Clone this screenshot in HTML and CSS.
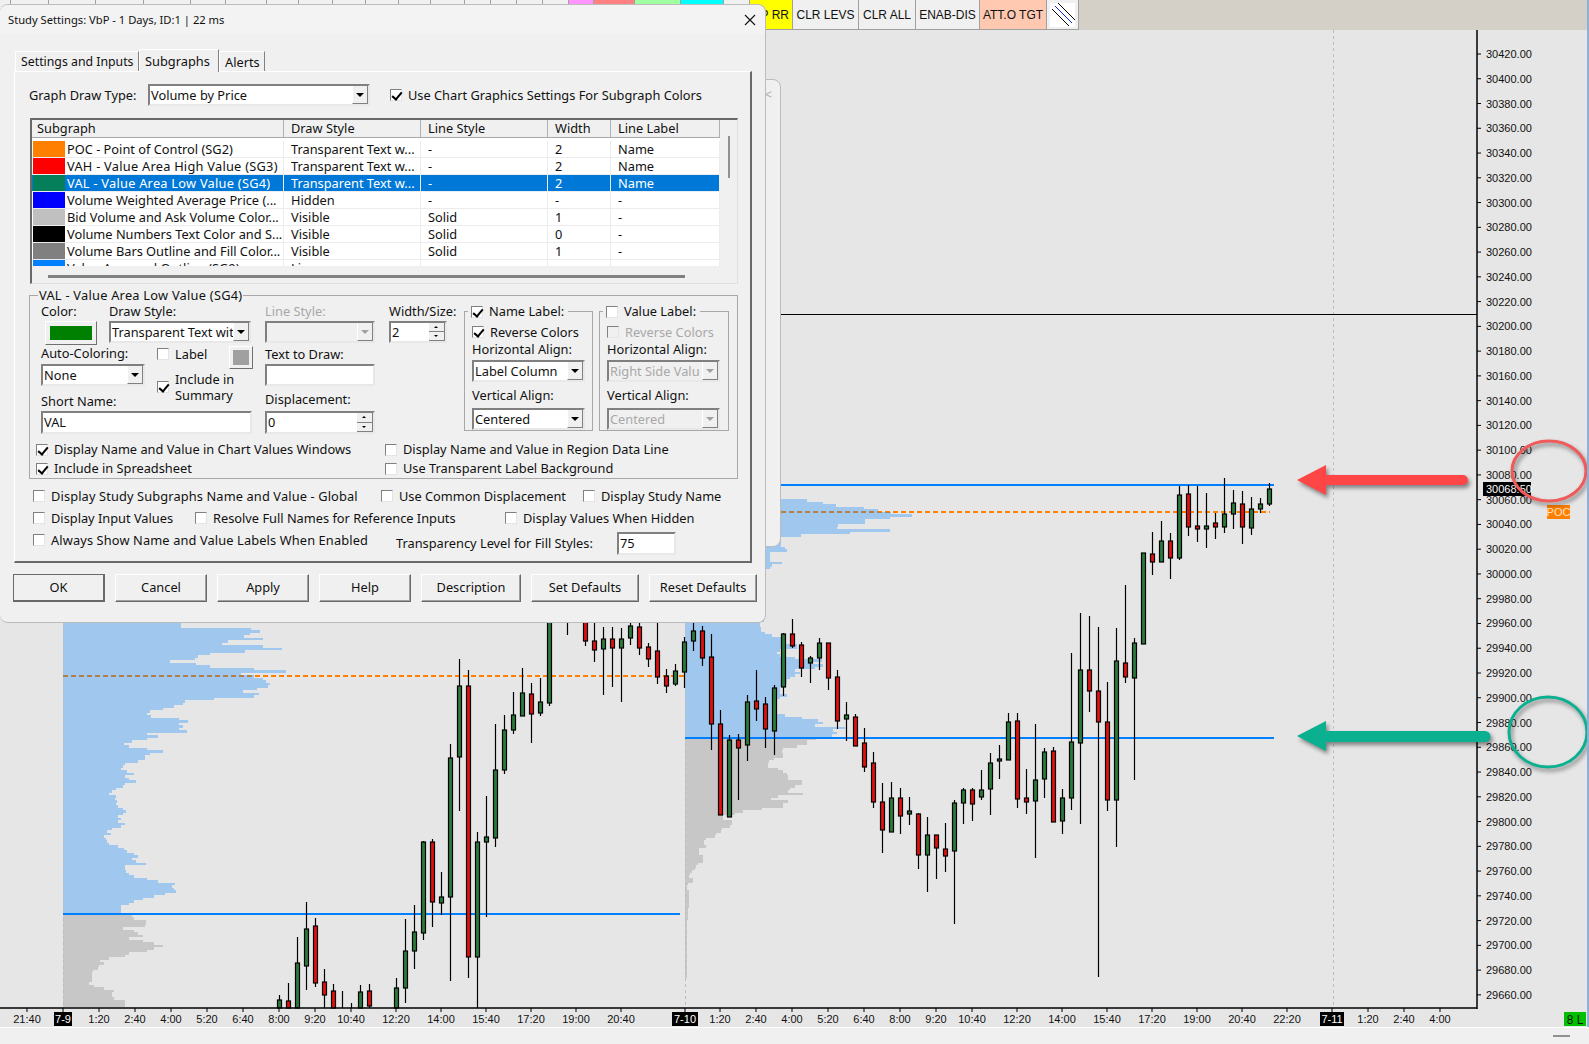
FILE: index.html
```html
<!DOCTYPE html>
<html>

<head>
  <title>Study Settings: VbP</title>
  <link rel="stylesheet" href="styles.css">
</head>

<body>
  <div class="workspace">
    <div class="toolbar">
      <div class="tb"></div><div class="tb"></div><div class="tb"></div><div class="tb"></div><div class="tb"></div>
      <div class="tb"></div><div class="tb"></div><div class="tb"></div><div class="tb"></div><div class="tb"></div>
      <div class="tb"></div><div class="tb"></div><div class="tb"></div><div class="tb"></div><div class="tb"></div>
      <div class="tb"></div><div class="tb"></div>
      <div class="tb tb-pink"></div>
      <div class="tb tb-salmon"></div>
      <div class="tb tb-green"></div>
      <div class="tb tb-cyan"></div>
      <div class="tb"></div>
      <div class="tb tb-yellow">P RR</div>
      <div class="tb">CLR LEVS</div>
      <div class="tb">CLR ALL</div>
      <div class="tb">ENAB-DIS</div>
      <div class="tb tb-peach">ATT.O TGT</div>
      <div class="tb tb-hatch">
        <svg width="25" height="24" viewBox="0 0 25 24">
          <rect width="25" height="24" fill="#fff" />
          <path d="M2 6 L19 23 M8 0 L25 17" stroke="#000" fill="none" />
          <path d="M5 3 L22 20" stroke="#0030e0" fill="none" />
        </svg>
      </div>
    </div>
    <div class="chart" id="chart"></div>
  </div>
  <div class="statusbar"><span class="min-dash"></span></div>

  <div class="side-panel"><span class="side-arrow">&lt;</span></div>

  <div class="dialog">
    <div class="title-bar">
      <span>Study Settings: VbP - 1 Days, ID:1 | 22 ms</span>
      <svg class="close-x" width="12" height="12" viewBox="0 0 12 12">
        <path d="M1 1 L11 11 M11 1 L1 11" stroke="#111" stroke-width="1.1" fill="none" />
      </svg>
    </div>

    <div class="tabs">
      <div class="tab tab-first">Settings and Inputs</div>
      <div class="tab tab-active">Subgraphs</div>
      <div class="tab tab-last">Alerts</div>
    </div>

    <div class="tab-panel">
      <div class="draw-type">
        <span class="draw-type-label">Graph Draw Type:</span>
        <div class="sel w222"><span class="sel-text">Volume by Price</span><span class="sel-btn"></span></div>
        <label class="opt chart-colors"><span class="check on"></span>Use Chart Graphics Settings For Subgraph Colors</label>
      </div>

      <div class="listbox">
        <div class="list-body">
          <div class="list-table">
            <div class="list-head">
              <div>Subgraph</div>
              <div>Draw Style</div>
              <div>Line Style</div>
              <div>Width</div>
              <div>Line Label</div>
            </div>
            <div class="list-rows">
              <div class="list-row">
                <div class="cell-name"><span class="swatch sw-orange"></span>POC - Point of Control (SG2)</div>
                <div>Transparent Text w...</div><div>-</div><div>2</div><div>Name</div>
              </div>
              <div class="list-row">
                <div class="cell-name roomy"><span class="swatch sw-red"></span>VAH - Value Area High Value (SG3)</div>
                <div>Transparent Text w...</div><div>-</div><div>2</div><div>Name</div>
              </div>
              <div class="list-row selected">
                <div class="cell-name roomy"><span class="swatch sw-teal"></span>VAL - Value Area Low Value (SG4)</div>
                <div>Transparent Text w...</div><div>-</div><div>2</div><div>Name</div>
              </div>
              <div class="list-row">
                <div class="cell-name"><span class="swatch sw-blue"></span>Volume Weighted Average Price (...</div>
                <div>Hidden</div><div>-</div><div>-</div><div>-</div>
              </div>
              <div class="list-row">
                <div class="cell-name"><span class="swatch sw-silver"></span>Bid Volume and Ask Volume Color...</div>
                <div>Visible</div><div>Solid</div><div>1</div><div>-</div>
              </div>
              <div class="list-row">
                <div class="cell-name"><span class="swatch sw-black"></span>Volume Numbers Text Color and S...</div>
                <div>Visible</div><div>Solid</div><div>0</div><div>-</div>
              </div>
              <div class="list-row">
                <div class="cell-name"><span class="swatch sw-gray"></span>Volume Bars Outline and Fill Color...</div>
                <div>Visible</div><div>Solid</div><div>1</div><div>-</div>
              </div>
              <div class="list-row">
                <div class="cell-name"><span class="swatch sw-sky"></span>Value Area and Outline (SG9)</div>
                <div>Line</div><div>-</div><div>-</div><div>-</div>
              </div>
            </div>
          </div>
          <div class="vscroll"></div>
        </div>
        <div class="hscroll"></div>
      </div>

      <fieldset class="group">
        <legend class="roomy">VAL - Value Area Low Value (SG4)</legend>
        <div class="group-top">
          <div class="col-a">
            <div class="color-row">
              <div class="color-col">
                <div class="lbl">Color:</div>
                <div class="color-btn"><span class="color-fill"></span></div>
              </div>
              <div>
                <div class="lbl">Draw Style:</div>
                <div class="sel w142"><span class="sel-text">Transparent Text wit</span><span class="sel-btn"></span></div>
              </div>
            </div>
            <div class="lower">
              <div>
                <div class="lbl">Auto-Coloring:</div>
                <div class="sel w104 mt1"><span class="sel-text">None</span><span class="sel-btn"></span></div>
                <div class="lbl short-lbl">Short Name:</div>
              </div>
              <div>
                <div class="label-row">
                  <label class="opt"><span class="check"></span>Label</label>
                  <div class="mini-color"><span class="mini-fill"></span></div>
                </div>
                <label class="opt summary"><span class="check on"></span><span>Include in<br>Summary</span></label>
              </div>
              <div class="field short-input">VAL</div>
            </div>
          </div>

          <div class="col-b">
            <div class="lbl off">Line Style:</div>
            <div class="sel w110 disabled"><span class="sel-text"></span><span class="sel-btn"></span></div>
            <div class="lbl mt4">Text to Draw:</div>
            <div class="field w110"></div>
            <div class="lbl mt6">Displacement:</div>
            <div class="spin w110 tall mt2"><span class="sel-text">0</span><span class="spin-btns"><i class="up"></i><i class="down"></i></span></div>
          </div>

          <div class="col-c">
            <div class="lbl">Width/Size:</div>
            <div class="spin w58"><span class="sel-text">2</span><span class="spin-btns"><i class="up"></i><i class="down"></i></span></div>
          </div>

          <fieldset class="label-group">
            <legend><label class="opt"><span class="check on"></span>Name Label:</label></legend>
            <label class="opt reverse"><span class="check on"></span>Reverse Colors</label>
            <div class="lbl">Horizontal Align:</div>
            <div class="sel w113 mt1"><span class="sel-text">Label Column</span><span class="sel-btn"></span></div>
            <div class="lbl mt6">Vertical Align:</div>
            <div class="sel w113 mt3"><span class="sel-text">Centered</span><span class="sel-btn"></span></div>
          </fieldset>

          <fieldset class="label-group value-group">
            <legend><label class="opt"><span class="check"></span>Value Label:</label></legend>
            <label class="opt reverse off"><span class="check disabled"></span>Reverse Colors</label>
            <div class="lbl">Horizontal Align:</div>
            <div class="sel w113 mt1 disabled"><span class="sel-text">Right Side Valu</span><span class="sel-btn"></span></div>
            <div class="lbl mt6">Vertical Align:</div>
            <div class="sel w113 mt3 disabled"><span class="sel-text">Centered</span><span class="sel-btn"></span></div>
          </fieldset>
        </div>

        <div class="group-checks">
          <label class="opt"><span class="check on"></span>Display Name and Value in Chart Values Windows</label>
          <label class="opt"><span class="check"></span>Display Name and Value in Region Data Line</label>
          <label class="opt"><span class="check on"></span>Include in Spreadsheet</label>
          <label class="opt"><span class="check"></span>Use Transparent Label Background</label>
        </div>
      </fieldset>

      <div class="global-row row-1">
        <label class="opt slight"><span class="check"></span>Display Study Subgraphs Name and Value - Global</label>
        <label class="opt"><span class="check"></span>Use Common Displacement</label>
        <label class="opt"><span class="check"></span>Display Study Name</label>
      </div>
      <div class="global-row row-2">
        <label class="opt"><span class="check"></span>Display Input Values</label>
        <label class="opt"><span class="check"></span>Resolve Full Names for Reference Inputs</label>
        <label class="opt"><span class="check"></span>Display Values When Hidden</label>
      </div>
      <div class="global-row row-3">
        <label class="opt slight"><span class="check"></span>Always Show Name and Value Labels When Enabled</label>
        <span class="transparency">Transparency Level for Fill Styles:</span>
        <div class="field w59 transparency">75</div>
      </div>
    </div>

    <div class="buttons">
      <button class="btn btn-default">OK</button>
      <button class="btn">Cancel</button>
      <button class="btn">Apply</button>
      <button class="btn">Help</button>
      <button class="btn btn-desc">Description</button>
      <button class="btn btn-wide">Set Defaults</button>
      <button class="btn btn-wide">Reset Defaults</button>
    </div>
  </div>

  <script src="chart.js"></script>
</body>

</html>
```

FILE: styles.css
```css
/* Page */
* {
  box-sizing: border-box;
}

html,
body {
  margin: 0;
  height: 100%;
  overflow: hidden;
}

body {
  background-color: #f0f0f0;
  font-family: "Noto Sans", sans-serif;
  font-size: 12.8px;
  color: #111;
}

.roomy {
  letter-spacing: 0.25px;
}

.slight {
  letter-spacing: 0.13px;
}

.workspace {
  height: 1027px;
  display: flex;
  flex-direction: column;
  border-right: 2px solid #8fb0d6;
}

/* Top toolbar */
.toolbar {
  height: 30px;
  flex: none;
  display: grid;
  grid-template-columns: 11px 38px 47px 48px 47px 35px 41px 32px 34px 33px 33px 32px 34px 26px 26px 26px 26px 25px 41px 46px 43px 26px 43px 66px 57px 64px 67px 32px;
  justify-content: start;
  background-color: #d4d0c8;
  font-family: "Liberation Sans", sans-serif;
  font-size: 12px;
}

.tb {
  background-color: #f0f0f0;
  border-right: 1px solid #a0a0a0;
  border-bottom: 1px solid #a0a0a0;
  display: flex;
  align-items: center;
  justify-content: center;
  white-space: nowrap;
}

.tb-pink { background-color: #ff96ff; }
.tb-salmon { background-color: #ff8080; }
.tb-green { background-color: #a0ffa0; }
.tb-cyan { background-color: #00ffff; }
.tb-yellow { background-color: #ffff00; justify-content: flex-end; padding-right: 3px; }
.tb-peach { background-color: #ffc8b0; }

.chart {
  flex: 1;
  background-color: #e6e6e6;
}

.chart svg {
  display: block;
}

.statusbar {
  height: 17px;
  border-top: 1px solid #fff;
  display: flex;
  justify-content: flex-end;
  padding: 7px 19px 0 0;
}

.min-dash {
  width: 17px;
  height: 2px;
  background-color: #909090;
}

/* Chart text */
.axis-text {
  font-family: "Liberation Sans", sans-serif;
  font-size: 11px;
  fill: #111;
}

.large-text {
  font-size: 12px;
}

.inverse-text {
  fill: #fff;
}

.poc-text {
  fill: #ffe0c0;
}

.shadowed {
  filter: drop-shadow(2px 3px 2px rgba(0, 0, 0, 0.45));
}

/* Panel that sticks out behind the dialog */
.side-panel {
  position: absolute;
  left: 700px;
  top: 79px;
  width: 81px;
  height: 468px;
  background-color: #f0f0f0;
  border: 1px solid #bbb;
  border-radius: 8px;
}

.side-arrow {
  position: absolute;
  right: 8px;
  top: 5px;
  color: #aaa;
  font-size: 13px;
}

/* Dialog */
.dialog {
  position: absolute;
  left: 0;
  top: 4px;
  width: 766px;
  height: 619px;
  background-color: #f0f0f0;
  border: 1px solid #bbb;
  border-left: none;
  border-radius: 8px;
  display: flex;
  flex-direction: column;
}

.title-bar {
  height: 29px;
  flex: none;
  padding: 0 9px 0 8px;
  display: flex;
  align-items: center;
  justify-content: space-between;
  background-color: #f3f3f3;
  border-radius: 8px 8px 0 0;
  font-size: 11.2px;
}

.tabs {
  height: 37px;
  flex: none;
  padding-left: 15px;
  display: flex;
  align-items: flex-end;
}

.tab {
  height: 20px;
  display: flex;
  align-items: center;
  padding: 0 5px;
  white-space: nowrap;
  border-top: 1px solid #fff;
  border-left: 1px solid #fff;
  border-right: 1px solid #808080;
}

.tab-first { width: 124px; font-size: 12.3px; }
.tab-active { width: 80px; height: 23px; margin-bottom: -1px; position: relative; background-color: #f0f0f0; }
.tab-last { width: 46px; }

.tab-panel {
  margin-left: 14px;
  width: 738px;
  height: 492px;
  flex: none;
  padding: 12px 12px 0 14px;
  border-top: 1px solid #fff;
  border-left: 1px solid #fff;
  border-right: 2px solid #696969;
  border-bottom: 2px solid #696969;
}

/* Graph draw type row */
.draw-type {
  display: flex;
  align-items: center;
  height: 22px;
}

.draw-type-label {
  width: 119px;
}

.chart-colors {
  margin-left: 20px;
}

/* Form controls */
.lbl {
  height: 17px;
  line-height: 15px;
  white-space: nowrap;
}

.off,
.off .lbl {
  color: #a8a8a8;
}

.opt {
  display: flex;
  align-items: center;
  white-space: nowrap;
}

.check {
  width: 12px;
  height: 12px;
  flex: none;
  margin-right: 6px;
  position: relative;
  background-color: #fff;
  border: 1px solid;
  border-color: #808080 #e4e4e4 #e4e4e4 #808080;
}

.check.disabled {
  background-color: #f0f0f0;
}

.check.on::after {
  content: "";
  position: absolute;
  left: 3px;
  top: 0;
  width: 4px;
  height: 8px;
  border-right: 2px solid #000;
  border-bottom: 2px solid #000;
  transform: rotate(40deg);
}

.sel,
.spin,
.field {
  height: 22px;
  flex: none;
  display: flex;
  background-color: #fff;
  border: 2px solid;
  border-color: #808080 #e8e8e8 #e8e8e8 #808080;
  line-height: 18px;
  white-space: nowrap;
}

.field {
  padding-left: 1px;
}

.sel-text {
  flex: 1;
  padding-left: 1px;
  overflow: hidden;
}

.sel-btn {
  width: 16px;
  flex: none;
  position: relative;
  background-color: #f0f0f0;
  border-right: 1px solid #808080;
  border-bottom: 1px solid #808080;
  border-left: 1px solid #fff;
}

.sel-btn::after {
  content: "";
  position: absolute;
  left: 3px;
  top: 7px;
  border: 4px solid transparent;
  border-top-color: #000;
  border-bottom: none;
}

.sel.disabled {
  background-color: #f0f0f0;
  color: #a8a8a8;
}

.sel.disabled .sel-btn::after {
  border-top-color: #a0a0a0;
}

.spin-btns {
  width: 16px;
  flex: none;
  display: flex;
  flex-direction: column;
}

.spin-btns i {
  flex: 1;
  position: relative;
  background-color: #f0f0f0;
  border-right: 1px solid #808080;
  border-bottom: 1px solid #808080;
}

.spin-btns i::after {
  content: "";
  position: absolute;
  left: 5px;
  top: 3px;
  border: 2px solid transparent;
}

.spin-btns .up::after {
  border-bottom-color: #000;
  border-top: none;
}

.spin-btns .down::after {
  border-top-color: #000;
  border-bottom: none;
}

.tall { height: 23px; }
.w58 { width: 58px; }
.w59 { width: 59px; height: 23px; }
.w104 { width: 104px; }
.w110 { width: 110px; }
.w113 { width: 113px; }
.w142 { width: 142px; }
.w222 { width: 222px; }
.mt1 { margin-top: 1px; }
.mt2 { margin-top: 2px; }
.mt3 { margin-top: 3px; }
.mt4 { margin-top: 4px; }
.mt6 { margin-top: 6px; }

/* Subgraph list */
.listbox {
  width: 708px;
  height: 166px;
  margin-top: 12px;
  margin-left: 1px;
  border-top: 2px solid #696969;
  border-left: 2px solid #696969;
  border-right: 1px solid #e0e0e0;
  border-bottom: 1px solid #e0e0e0;
}

.list-body {
  display: flex;
}

.list-table {
  width: 688px;
  flex: none;
}

.list-head,
.list-row {
  display: grid;
  grid-template-columns: 252px 137px 127px 63px 109px;
}

.list-head {
  height: 18px;
  line-height: 17px;
  border-bottom: 1px solid #a8a8a8;
}

.list-head div {
  padding-left: 7px;
  border-right: 1px solid #b0b0b0;
}

.list-head div:first-child {
  padding-left: 5px;
}

.list-rows {
  height: 128px;
  padding-top: 3px;
  overflow: hidden;
  background-color: #fff;
}

.list-row {
  height: 17px;
  line-height: 17px;
  border-bottom: 1px solid #ececec;
  white-space: nowrap;
}

.list-row div {
  padding-left: 7px;
  border-right: 1px solid #ececec;
}

.list-row .cell-name {
  padding-left: 1px;
  display: flex;
}

.list-row.selected {
  background-color: #0078d7;
  color: #fff;
}

.swatch {
  width: 32px;
  height: 16px;
  flex: none;
  margin-right: 2px;
}

.sw-orange { background-color: #ff8000; }
.sw-red { background-color: #ff0000; }
.sw-teal { background-color: #057e5a; }
.sw-blue { background-color: #0000ff; }
.sw-silver { background-color: #c0c0c0; }
.sw-black { background-color: #000; }
.sw-gray { background-color: #808080; }
.sw-sky { background-color: #0080ff; }

.vscroll {
  width: 2px;
  height: 42px;
  margin: 16px 0 0 8px;
  background-color: #909090;
}

.hscroll {
  width: 637px;
  height: 3px;
  margin: 9px 0 0 16px;
  background-color: #808080;
}

/* Subgraph settings group */
.group {
  width: 709px;
  height: 193px;
  margin: 2px 0 0;
  padding: 0;
  border: 1px solid #a8a8a8;
}

.group legend {
  padding: 0 1px;
  margin-left: 8px;
  line-height: 18px;
}

.group-top {
  display: flex;
  height: 130px;
  padding-left: 11px;
}

.col-a { width: 224px; flex: none; }
.col-b { width: 124px; flex: none; }
.col-c { width: 75px; flex: none; }

.color-row {
  display: flex;
  height: 42px;
}

.color-col { width: 68px; }

.color-btn {
  width: 52px;
  height: 24px;
  margin-left: 4px;
  padding: 4px;
  display: flex;
  border: 1px solid;
  border-color: #fff #707070 #707070 #fff;
}

.color-fill {
  flex: 1;
  background-color: #008000;
}

.lower {
  display: grid;
  grid-template-columns: 116px 96px;
}

.short-lbl {
  margin-top: 8px;
}

.short-input {
  grid-column: 1 / 3;
  width: 211px;
  height: 23px;
}

.label-row {
  height: 23px;
  display: flex;
  justify-content: space-between;
  align-items: flex-start;
}

.label-row .opt {
  margin-top: -1px;
}

.mini-color {
  width: 24px;
  height: 23px;
  padding: 3px;
  display: flex;
  border: 1px solid;
  border-color: #fff #707070 #707070 #fff;
}

.mini-fill {
  flex: 1;
  background-color: #a0a0a0;
}

.summary {
  margin-top: 2px;
  line-height: 16px;
}

.label-group {
  width: 129px;
  height: 127px;
  margin: 0 6px 0 0;
  padding: 0 0 0 7px;
  flex: none;
  border: 1px solid #a8a8a8;
}

.value-group {
  width: 130px;
}

.label-group legend {
  margin-left: -4px;
  padding: 0 4px 0 3px;
  height: 15px;
  line-height: 15px;
}

.reverse {
  margin-top: 5px;
  margin-bottom: 2px;
  height: 16px;
}

.group-checks {
  display: grid;
  grid-template-columns: 349px 1fr;
  grid-auto-rows: 19px;
  margin-top: 6px;
  padding-left: 6px;
  line-height: 19px;
}

/* Global options */
.global-row {
  display: grid;
  height: 20px;
  grid-template-rows: 20px;
  padding-left: 4px;
  align-items: center;
  white-space: nowrap;
}

.row-1 { margin-top: 7px; grid-template-columns: 348px 202px auto; }
.row-2 { margin-top: 2px; grid-template-columns: 162px 310px auto; }
.row-3 { margin-top: 2px; grid-template-columns: 363px 221px auto; }

.transparency {
  margin-top: 6px;
}

/* Bottom buttons */
.buttons {
  margin-top: 11px;
  padding-left: 13px;
  display: flex;
  gap: 10px;
}

.btn {
  width: 92px;
  height: 28px;
  padding: 0 0 2px;
  font-family: inherit;
  font-size: 12.8px;
  color: #111;
  background-color: #f0f0f0;
  border: 1px solid;
  border-color: #fff #696969 #696969 #fff;
  box-shadow: inset -1px -1px 0 #a0a0a0;
}

.btn-default {
  border: 2px solid #696969;
  border-top-width: 1px;
  border-left-width: 1px;
  box-shadow: none;
}

.btn-desc { width: 100px; }
.btn-wide { width: 108px; }
```

FILE: chart.js
```js
// Volume by price chart, all coordinates are page pixels
const NS = 'http://www.w3.org/2000/svg';
const CHART_TOP = 30;
const AXIS_X = 1477;
const AXIS_Y = 1008;

const svg = document.createElementNS(NS, 'svg');
svg.setAttribute('width', 1587);
svg.setAttribute('height', 1027 - CHART_TOP);
svg.setAttribute('viewBox', `0 ${CHART_TOP} 1587 ${1027 - CHART_TOP}`);
document.getElementById('chart').appendChild(svg);

function add(tag, attrs, text) {
  const el = document.createElementNS(NS, tag);
  for (const key in attrs) el.setAttribute(key, attrs[key]);
  if (text) el.textContent = text;
  svg.appendChild(el);
  return el;
}

function line(x1, y1, x2, y2, color, width, dash) {
  const attrs = { x1, y1, x2, y2, stroke: color, 'stroke-width': width };
  if (dash) attrs['stroke-dasharray'] = dash;
  return add('line', attrs);
}

// right edge of each price row of the profile, rows are 2.5px tall
function profile(x0, yStart, rows, color) {
  let d = `M${x0} ${yStart}`;
  rows.forEach((right, i) => {
    d += ` L${right} ${yStart + i * 2.5} L${right} ${yStart + (i + 1) * 2.5}`;
  });
  d += ` L${x0} ${yStart + rows.length * 2.5} Z`;
  add('path', { d, fill: color, 'fill-opacity': 0.3, 'shape-rendering': 'crispEdges' });
}

const BLUE = 'rgb(0,130,255)';
const GRAY = 'rgb(130,130,130)';

// orange POC lines go below the translucent profiles
line(63, 676, 685, 676, '#ff8000', 2, '5 3');
line(685, 512, 1270, 512, '#ff8000', 2, '5 3');

// 7-9 session
profile(63, 620, [190, 181, 181, 251, 260, 250, 244, 263, 228, 222, 263, 282, 245, 210, 198, 195, 170, 196, 210, 254, 286, 241, 254, 263, 266, 270, 268, 257, 243, 259, 254, 214, 185, 183, 174, 163, 150, 147, 151, 179, 188, 179, 183, 179, 187, 147, 158, 147, 132, 124, 129, 147, 163, 150, 145, 145, 138, 125, 123, 121, 127, 134, 125, 129, 136, 125, 123, 116, 112, 109, 116, 115, 117, 116, 118, 123, 126, 123, 118, 121, 118, 125, 121, 112, 107, 111, 104, 106, 107, 109, 118, 124, 127, 134, 138, 132, 136, 146, 125, 125, 126, 129, 134, 147, 158, 175, 172, 174, 176, 165, 154, 143, 134, 129, 121, 121, 121], BLUE);
profile(63, 914.5, [132, 134, 146, 146, 145, 123, 134, 138, 143, 129, 143, 154, 163, 154, 147, 129, 125, 109, 100, 104, 99, 98, 93, 92, 92, 92, 92, 89, 94, 104, 114, 112, 112, 114, 125, 125, 125], GRAY);

// 7-10 session
const hiddenRows = new Array(20).fill(764);
profile(685, 499, [807, 823, 836, 864, 878, 891, 912, 890, 865, 865, 838, 837, 890, 850, 801, 781, 781, 781, 781, 785, 787, 770, 770, 770, 770, 782, 772, 770, 766].concat(hiddenRows, [760, 760, 761, 761, 765, 772, 782, 781, 781, 797, 797, 780, 777, 780, 795, 822, 813, 823, 815, 795, 800, 795, 790, 787, 787, 785, 780, 780, 780, 787, 780, 777, 775, 775, 777, 777, 777, 785, 802, 818, 823, 815, 845, 833, 837, 832]), BLUE);
profile(685, 737.5, [816, 807, 807, 797, 783, 782, 783, 783, 774, 769, 768, 768, 778, 783, 787, 788, 788, 802, 802, 795, 790, 788, 803, 778, 771, 788, 783, 783, 762, 743, 735, 723, 723, 732, 732, 730, 722, 721, 716, 715, 706, 704, 704, 706, 699, 699, 699, 703, 703, 703, 698, 696, 695, 692, 690, 689, 693, 693, 688, 687, 687, 689, 689, 689, 689, 689, 689, 689, 688, 688, 688, 688, 688, 687, 687, 687, 687, 687, 687, 687, 687, 687, 687, 687, 687, 687, 687, 687, 687, 687, 687, 687, 687, 687, 687, 687], GRAY);

// day separators
[63, 685, 1333].forEach(x => line(x + 0.5, CHART_TOP, x + 0.5, AXIS_Y, '#bdbdbd', 1, '3 3'));

// high and low lines
line(781, 314.5, AXIS_X, 314.5, '#000', 1);
line(63, 914, 680, 914, '#0080ff', 2);
line(685, 738, 1274, 738, '#0080ff', 2);
line(685, 485, 1274, 485, '#0080ff', 2);

// candles: x, wick top, body top, body bottom, wick bottom, r/g
const candles = [
  [279, 995, 1000, 1008, 1008, 'g'], [288, 983, 1001, 1008, 1008, 'r'], [297, 937, 963, 1008, 1008, 'g'],
  [306, 902, 929, 966, 990, 'g'], [315, 918, 926, 983, 987, 'r'], [324, 969, 982, 995, 1008, 'r'],
  [333, 984, 991, 1008, 1008, 'r'], [342, 991, 1008, 1008, 1008, 'g'], [351, 1003, 1008, 1008, 1008, 'g'],
  [360, 985, 992, 1008, 1008, 'g'], [369, 984, 991, 1006, 1008, 'r'],
  [396, 978, 988, 1008, 1008, 'g'], [405, 919, 951, 988, 1003, 'g'], [414, 905, 932, 951, 969, 'g'],
  [423, 841, 842, 933, 940, 'g'], [432, 839, 842, 902, 927, 'r'], [441, 872, 897, 903, 915, 'g'],
  [450, 744, 758, 897, 981, 'g'], [459, 659, 686, 757, 811, 'g'], [468, 670, 686, 957, 978, 'r'],
  [477, 832, 842, 957, 1008, 'g'], [486, 796, 837, 842, 917, 'g'], [495, 724, 770, 838, 847, 'g'],
  [504, 715, 730, 770, 774, 'g'], [513, 692, 715, 730, 734, 'g'], [522, 668, 693, 716, 716, 'g'],
  [531, 683, 694, 714, 743, 'r'], [540, 678, 702, 713, 716, 'g'], [549, 620, 620, 703, 706, 'g'],
  [567, 620, 620, 620, 635, 'g'], [585, 620, 620, 641, 646, 'r'], [594, 622, 641, 650, 662, 'r'],
  [603, 627, 639, 649, 695, 'g'], [612, 627, 639, 648, 687, 'r'], [621, 628, 639, 648, 702, 'g'],
  [630, 622, 626, 638, 645, 'g'], [639, 622, 627, 648, 655, 'r'], [648, 643, 647, 659, 667, 'r'],
  [657, 623, 651, 677, 684, 'r'], [666, 669, 676, 686, 693, 'r'], [675, 664, 671, 684, 686, 'g'],
  [684, 637, 642, 672, 688, 'g'], [693, 623, 631, 641, 651, 'g'], [702, 626, 631, 658, 666, 'r'],
  [711, 634, 657, 724, 750, 'r'], [720, 710, 724, 815, 815, 'r'], [729, 735, 740, 817, 817, 'g'],
  [738, 734, 740, 748, 800, 'r'], [747, 695, 702, 745, 761, 'g'], [756, 670, 701, 709, 721, 'r'],
  [765, 697, 704, 729, 748, 'r'], [774, 685, 688, 731, 755, 'g'], [783, 633, 634, 687, 696, 'g'],
  [792, 619, 634, 646, 648, 'r'], [801, 642, 645, 668, 677, 'r'], [810, 656, 658, 663, 683, 'g'],
  [819, 638, 643, 658, 670, 'g'], [828, 643, 643, 678, 690, 'r'], [837, 670, 677, 721, 729, 'r'],
  [846, 702, 715, 719, 741, 'g'], [855, 714, 717, 746, 746, 'r'], [864, 728, 743, 767, 772, 'r'],
  [873, 752, 763, 802, 808, 'r'], [882, 783, 802, 830, 853, 'r'], [891, 782, 798, 832, 832, 'g'],
  [900, 788, 798, 816, 834, 'r'], [909, 797, 811, 814, 825, 'g'], [918, 813, 814, 855, 869, 'r'],
  [927, 817, 835, 855, 892, 'g'], [936, 835, 835, 848, 879, 'r'], [945, 823, 849, 856, 872, 'r'],
  [954, 800, 803, 851, 924, 'g'], [963, 788, 790, 803, 824, 'g'], [972, 788, 790, 804, 821, 'r'],
  [981, 770, 790, 797, 800, 'g'], [990, 753, 763, 789, 815, 'g'], [999, 745, 759, 761, 779, 'g'],
  [1008, 713, 722, 760, 760, 'g'], [1017, 713, 721, 799, 808, 'r'], [1026, 769, 798, 802, 814, 'r'],
  [1035, 724, 780, 801, 858, 'g'], [1044, 748, 752, 779, 798, 'g'], [1053, 747, 751, 822, 822, 'r'],
  [1062, 789, 798, 821, 834, 'g'], [1071, 653, 742, 798, 810, 'g'], [1080, 613, 670, 743, 824, 'g'],
  [1089, 616, 670, 691, 712, 'r'], [1098, 627, 691, 722, 977, 'r'], [1107, 682, 722, 800, 811, 'r'],
  [1116, 628, 661, 800, 847, 'g'], [1125, 585, 663, 677, 683, 'r'], [1134, 638, 643, 678, 780, 'g'],
  [1143, 553, 553, 644, 644, 'g'], [1152, 532, 554, 562, 575, 'r'], [1161, 521, 541, 562, 562, 'g'],
  [1170, 533, 541, 558, 579, 'r'], [1179, 486, 495, 558, 560, 'g'], [1188, 485, 494, 527, 536, 'r'],
  [1197, 486, 526, 529, 542, 'r'], [1206, 493, 526, 529, 548, 'g'], [1215, 513, 523, 527, 539, 'r'],
  [1224, 478, 514, 527, 533, 'g'], [1233, 490, 503, 514, 529, 'g'], [1242, 491, 504, 527, 544, 'r'],
  [1251, 497, 509, 528, 535, 'g'], [1260, 498, 504, 509, 513, 'g'], [1269, 483, 489, 504, 506, 'g']
];

candles.forEach(([x, high, top, bottom, low, side]) => {
  const cx = x + 0.5;
  line(cx, high, cx, low, '#000', 1.2);
  if (bottom > top) {
    add('rect', {
      x: cx - 2, y: top, width: 4, height: bottom - top,
      fill: side === 'r' ? '#e01010' : '#2a7a3c', stroke: '#000', 'stroke-width': 1.2
    });
  }
});

// price axis
line(AXIS_X, CHART_TOP, AXIS_X, AXIS_Y + 1, '#000', 1.5);
line(0, AXIS_Y, AXIS_X, AXIS_Y, '#000', 1.5);
for (let i = 0; i <= 38; i++) {
  const y = 54 + i * 24.76;
  line(AXIS_X, y, AXIS_X + 4, y, '#000', 1);
  add('text', { x: 1486, y: y + 4, class: 'axis-text' }, (30420 - i * 20).toFixed(2));
}

// time axis
const times = [
  [27, '21:40'], [99, '1:20'], [135, '2:40'], [171, '4:00'], [207, '5:20'], [243, '6:40'], [279, '8:00'],
  [315, '9:20'], [351, '10:40'], [396, '12:20'], [441, '14:00'], [486, '15:40'], [531, '17:20'], [576, '19:00'],
  [621, '20:40'], [720, '1:20'], [756, '2:40'], [792, '4:00'], [828, '5:20'], [864, '6:40'], [900, '8:00'],
  [936, '9:20'], [972, '10:40'], [1017, '12:20'], [1062, '14:00'], [1107, '15:40'], [1152, '17:20'], [1197, '19:00'],
  [1242, '20:40'], [1287, '22:20'], [1368, '1:20'], [1404, '2:40'], [1440, '4:00']
];
times.forEach(([x, label]) => {
  line(x, AXIS_Y, x, AXIS_Y + 4, '#000', 1);
  add('text', { x, y: 1023, 'text-anchor': 'middle', class: 'axis-text' }, label);
});

// session dates on black boxes
[[54, 18, '7-9'], [672, 26, '7-10'], [1320, 24, '7-11']].forEach(([x, w, label]) => {
  line(x + w / 2, AXIS_Y, x + w / 2, AXIS_Y + 4, '#000', 1);
  add('rect', { x, y: 1012, width: w, height: 14, fill: '#000' });
  add('text', { x: x + w / 2, y: 1023, 'text-anchor': 'middle', class: 'axis-text inverse-text' }, label);
});

// last price and POC tags
add('rect', { x: 1483, y: 482, width: 48, height: 14, fill: '#000' });
add('text', { x: 1486, y: 493, class: 'axis-text inverse-text' }, '30068.50');
add('rect', { x: 1547, y: 505, width: 23, height: 14, fill: '#ff8000' });
add('text', { x: 1558.5, y: 516, 'text-anchor': 'middle', class: 'axis-text poc-text' }, 'POC');

add('rect', { x: 1564, y: 1012, width: 22, height: 14, fill: '#00c000' });
add('text', { x: 1575, y: 1023.5, 'text-anchor': 'middle', class: 'axis-text large-text' }, '8 L');

// arrows and circles drawn on top of the screenshot
add('path', { d: 'M1297 480 L1326 465 V475 H1463 a5 5 0 0 1 0 10 H1326 V495 Z', fill: '#ff4646', class: 'shadowed' });
add('ellipse', { cx: 1549, cy: 471, rx: 37, ry: 30, fill: 'none', stroke: '#f05a5a', 'stroke-width': 3, class: 'shadowed' });
add('path', { d: 'M1297 736 L1326 721 V731 H1485 a5.5 5.5 0 0 1 0 11 H1326 V751 Z', fill: '#0ab08f', class: 'shadowed' });
add('ellipse', { cx: 1548, cy: 732, rx: 39, ry: 35, fill: 'none', stroke: '#0ab08f', 'stroke-width': 3, class: 'shadowed' });
```
